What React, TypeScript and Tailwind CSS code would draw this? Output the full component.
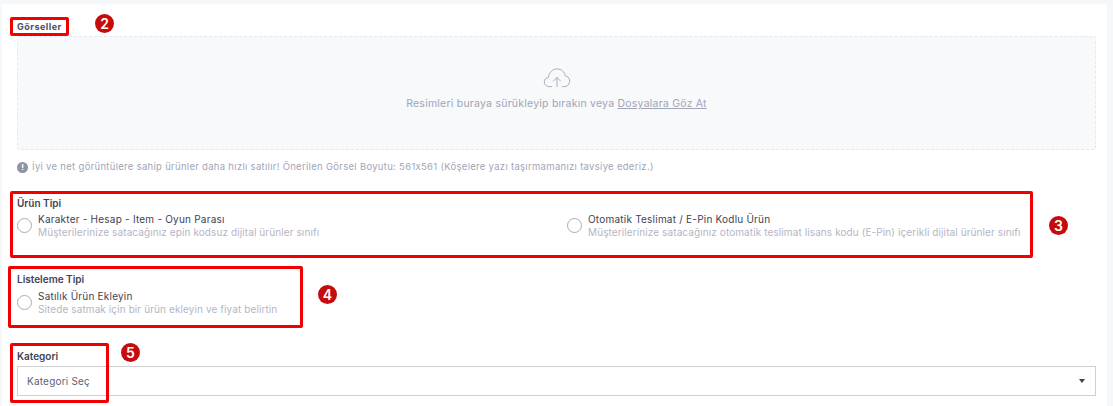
import React from "react";

function Radio() {
  return <span className="block w-[15px] h-[15px] shrink-0 rounded-full border border-[#a9abb8] bg-white" />;
}

function Option({ title, desc, className = "" }: { title: string; desc: string; className?: string }) {
  return (
    <div className={"flex items-start gap-1.5 " + className}>
      <div className="mt-[5px]"><Radio /></div>
      <div>
        <div className="text-[10px] leading-[13px] tracking-[0.22px] text-[#3f4254]">{title}</div>
        <div className="text-[10px] leading-[13px] tracking-[0.1px] text-[#b5b5c3] whitespace-nowrap">{desc}</div>
      </div>
    </div>
  );
}

function Mark({ n, className }: { n: string; className: string }) {
  return (
    <span className={"absolute w-[19px] h-[19px] rounded-full bg-[#c50b0b] text-white text-[14px] leading-[19px] font-semibold text-center " + className}>{n}</span>
  );
}

function Box({ className }: { className: string }) {
  return <div className={"absolute border-[3px] border-[#f00000] rounded-[2px] " + className} />;
}

export default function App() {
  return (
    <div className="relative w-[1113px] h-[406px] overflow-hidden bg-[#f5f8fa] font-['Inter','Noto_Sans',sans-serif]">
      <div className="ml-[2px] mt-[4px] w-[1105px] h-[402px] bg-white pl-[15px] pr-[11px] pt-[17px]">
        <div className="text-[9px] leading-[11px] font-bold tracking-[0.5px] text-[#464e5f]">Görseller</div>
        <div className="mt-[4px] h-[114px] border border-dashed border-[#e6e9f0] bg-[#f7f9fb] rounded-[2px] flex flex-col items-center pt-[31px]">
          <svg width="30" height="20" viewBox="0 0 30 22" fill="none" stroke="#a1a5b7" strokeWidth="1" strokeLinecap="round" strokeLinejoin="round">
            <path d="M9 20.5H6.5C3.5 20.5 1 18.3 1 15.3c0-2.7 2-4.7 4.6-5C6.3 5 10 1 15 1c4.7 0 8.3 3.2 9 7.6 3 .3 5 2.8 5 5.7 0 3.4-2.6 6.2-6 6.2h-2" />
            <path d="M15 20.5V10.5M11 14.5l4-4 4 4" />
          </svg>
          <div className="mt-[9px] text-[10.5px] leading-[14px] tracking-[0.23px] text-[#a1a5b7]">
            Resimleri buraya sürükleyip bırakın veya <span className="underline">Dosyalara Göz At</span>
          </div>
        </div>
        <div className="mt-[10px] flex items-center gap-1 h-[14px]">
          <span className="w-[11px] h-[11px] rounded-full bg-[#8f93a3] text-white text-[8px] leading-[11px] font-bold text-center">!</span>
          <span className="text-[9.5px] tracking-[0.3px] text-[#a1a5b7] whitespace-nowrap">İyi ve net görüntülere sahip ürünler daha hızlı satılır! Önerilen Görsel Boyutu: 561x561 (Köşelere yazı taşırmamanızı tavsiye ederiz.)</span>
        </div>

        <div className="mt-[23px] text-[10px] leading-[13px] font-semibold text-[#3f4254]">Ürün Tipi</div>
        <div className="flex mt-[3px]">
          <Option className="w-[550px]" title="Karakter - Hesap - Item - Oyun Parası" desc="Müşterilerinize satacağınız epin kodsuz dijital ürünler sınıfı" />
          <Option title="Otomatik Teslimat / E-Pin Kodlu Ürün" desc="Müşterilerinize satacağınız otomatik teslimat lisans kodu (E-Pin) içerikli dijital ürünler sınıfı" />
        </div>

        <div className="mt-[34px] text-[10px] leading-[13px] font-semibold text-[#3f4254]">Listeleme Tipi</div>
        <Option className="mt-[4px]" title="Satılık Ürün Ekleyin" desc="Sitede satmak için bir ürün ekleyin ve fiyat belirtin" />

        <div className="mt-[34px] text-[10px] leading-[13px] font-semibold text-[#3f4254]">Kategori</div>
        <div className="mt-[3px] h-[30px] border border-[#d0d0d0] flex items-center justify-between pl-[9px] pr-[10px]">
          <span className="text-[10px] tracking-[0.2px] text-[#5e6278]">Kategori Seç</span>
          <span className="w-0 h-0 border-x-[3px] border-x-transparent border-t-[4px] border-t-[#3f4254]" />
        </div>
      </div>

      <Box className="left-[10px] top-[17px] w-[59px] h-[19px]" />
      <Box className="left-[10px] top-[191px] w-[1023px] h-[67px]" />
      <Box className="left-[8px] top-[266px] w-[295px] h-[62px]" />
      <Box className="left-[10px] top-[343px] w-[99px] h-[60px]" />
      <Mark n="2" className="left-[95px] top-[14px]" />
      <Mark n="3" className="left-[1049px] top-[216px]" />
      <Mark n="4" className="left-[318px] top-[285px]" />
      <Mark n="5" className="left-[121px] top-[343px]" />
    </div>
  );
}
